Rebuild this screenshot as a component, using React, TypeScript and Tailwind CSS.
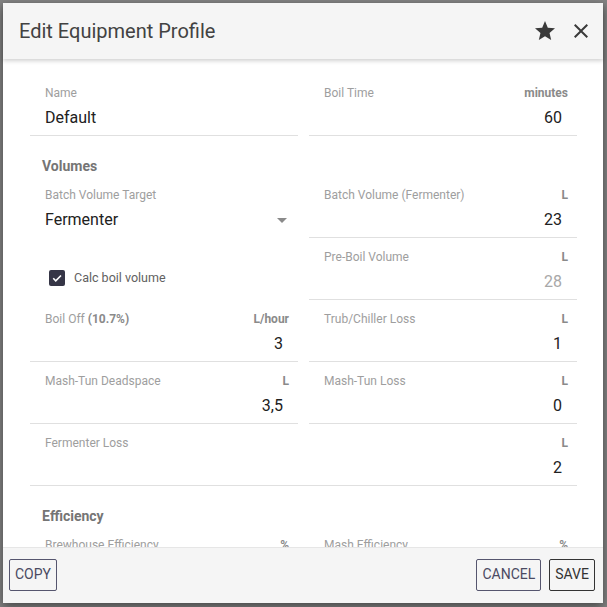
import React from 'react';

type FieldProps = {
  label: React.ReactNode;
  unit?: string;
  value?: string;
  muted?: boolean;
  alignLeft?: boolean;
  wide?: boolean;
};

function Field({ label, unit, value, muted, alignLeft, wide }: FieldProps) {
  return (
    <div className={`h-[62px] pt-[12px] border-b border-[#e0e0e0] ${wide ? 'col-span-2' : ''}`}>
      <div className="flex justify-between h-[14px] leading-[14px] pl-[15px] pr-[9px] text-[12px] text-[#9e9e9e]">
        <span>{label}</span>
        {unit && <span className="font-bold text-[12px] text-[#8a8a8a]">{unit}</span>}
      </div>
      {value && (
        <div
          className={`mt-[6px] h-[24px] leading-[24px] text-[16px] px-[15px] ${alignLeft ? 'text-left' : 'text-right'} ${
            muted ? 'text-[#a8a8a8]' : 'text-[#212121]'
          }`}
        >
          {value}
        </div>
      )}
    </div>
  );
}

function Heading({ children }: { children: React.ReactNode }) {
  return (
    <div className="col-span-2 mt-[20px] h-[20px] leading-[20px] pl-[12px] text-[14px] font-bold text-[#757575]">
      {children}
    </div>
  );
}

export default function App() {
  return (
    <div
      className="w-[607px] h-[607px] bg-[#838383] p-[3px] overflow-hidden"
      style={{ fontFamily: 'Roboto, "Liberation Sans", sans-serif' }}
    >
      <div className="w-[600px] h-[600px] bg-white flex flex-col shadow-[0_4px_10px_rgba(0,0,0,0.45)]">
        <div className="h-[56px] flex-shrink-0 bg-[#f5f5f5] flex items-center justify-between pl-[16px] pr-[10px] shadow-[0_2px_4px_rgba(0,0,0,0.18)] relative z-10">
          <h1 className="text-[20px] text-[#424242] font-normal">Edit Equipment Profile</h1>
          <div className="flex items-center gap-[12px]">
            <svg width="24" height="24" viewBox="0 0 24 24" fill="#3a3a3a">
              <path d="M12 17.27L18.18 21l-1.64-7.03L22 9.24l-7.19-.61L12 2 9.19 8.63 2 9.24l5.46 4.73L5.82 21z" />
            </svg>
            <svg width="24" height="24" viewBox="0 0 24 24" fill="#3a3a3a">
              <path d="M19 6.41L17.59 5 12 10.59 6.41 5 5 6.41 10.59 12 5 17.59 6.41 19 12 13.41 17.59 19 19 17.59 13.41 12z" />
            </svg>
          </div>
        </div>

        <div className="flex-1 overflow-hidden pt-[15px] pl-[27px] pr-[26px]">
          <div className="grid grid-cols-2 gap-x-[11px]">
            <Field label="Name" value="Default" alignLeft />
            <Field label="Boil Time" unit="minutes" value="60" />

            <Heading>Volumes</Heading>

            <div className="h-[62px] pt-[12px]">
              <div className="h-[14px] leading-[14px] pl-[15px] text-[12px] text-[#9e9e9e]">Batch Volume Target</div>
              <div className="mt-[6px] h-[24px] flex items-center justify-between pl-[15px] pr-[11px]">
                <span className="text-[16px] text-[#212121]">Fermenter</span>
                <svg width="10" height="5" viewBox="0 0 10 5" fill="#8a8a8a">
                  <path d="M0 0h10L5 5z" />
                </svg>
              </div>
            </div>
            <Field label="Batch Volume (Fermenter)" unit="L" value="23" />

            <div className="h-[62px] pt-[32px] pl-[19px] flex items-start">
              <div className="w-[16px] h-[16px] rounded-[2px] bg-[#353546] flex items-center justify-center">
                <svg width="12" height="12" viewBox="0 0 24 24" fill="none" stroke="white" strokeWidth="3.2">
                  <path d="M4.5 12.5l5 5L20 7" />
                </svg>
              </div>
              <span className="ml-[9px] leading-[16px] text-[12.5px] text-[#616161]">Calc boil volume</span>
            </div>
            <Field label="Pre-Boil Volume" unit="L" value="28" muted />

            <Field
              label={
                <>
                  Boil Off <span className="font-bold text-[#8a8a8a]">(10.7%)</span>
                </>
              }
              unit="L/hour"
              value="3"
            />
            <Field label="Trub/Chiller Loss" unit="L" value="1" />

            <Field label="Mash-Tun Deadspace" unit="L" value="3,5" />
            <Field label="Mash-Tun Loss" unit="L" value="0" />

            <Field label="Fermenter Loss" unit="L" value="2" wide />

            <Heading>Efficiency</Heading>

            <Field label="Brewhouse Efficiency" unit="%" />
            <Field label="Mash Efficiency" unit="%" />
          </div>
        </div>

        <div className="h-[56px] flex-shrink-0 bg-[#f5f5f5] border-t border-[#e6e6e6] flex items-center justify-between pl-[6px] pr-[8px] pb-[2px]">
          <button className="h-[32px] px-[5px] border border-[#55556e] rounded-[2px] text-[14px] text-[#4a4a62] uppercase">
            Copy
          </button>
          <div className="flex gap-[8px]">
            <button className="h-[32px] px-[5px] border border-[#55556e] rounded-[2px] text-[14px] text-[#4a4a62] uppercase">
              Cancel
            </button>
            <button className="h-[32px] px-[5px] border border-[#333333] rounded-[2px] text-[14px] text-[#333333] uppercase">
              Save
            </button>
          </div>
        </div>
      </div>
    </div>
  );
}
